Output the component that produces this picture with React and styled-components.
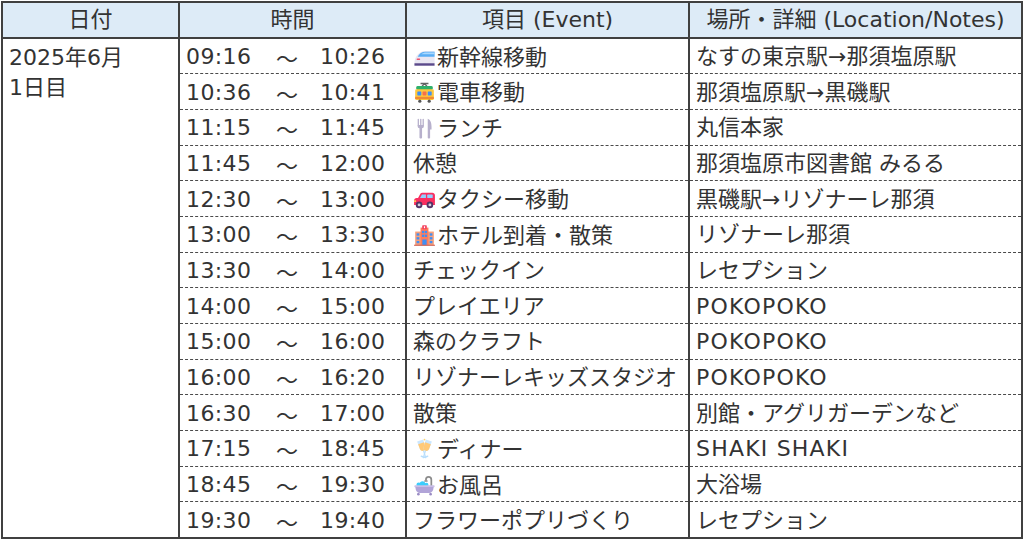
import React from 'react';
import styled, { createGlobalStyle } from 'styled-components';

const GlobalStyle = createGlobalStyle`
  html, body { margin: 0; padding: 0; background: #ffffff; }
  body {
    font-family: "DejaVu Sans", "Noto Sans CJK JP", sans-serif;
    color: #333333;
  }
`;

const Page = styled.div`
  padding: 1px 0 0 1px;
`;

const Table = styled.table`
  border-collapse: collapse;
  table-layout: fixed;
  width: 1020px;
  font-size: 22px;
`;

const HeadCell = styled.th`
  height: 34px;
  padding: 0;
  background: #ddebf7;
  border: 2px solid #404040;
  font-weight: normal;
  text-align: center;
  vertical-align: middle;
  line-height: 1;
  white-space: nowrap;
`;

const Row = styled.tr`
  height: 35.7px;
  &:last-child td {
    border-bottom: 2px solid #404040;
  }
`;

const Cell = styled.td`
  padding: 2px 0 0 ${(p) => p.$pad}px;
  border-left: 2px solid #404040;
  border-right: 2px solid #404040;
  border-bottom: 1px dashed #4a4a4a;
  vertical-align: middle;
  white-space: nowrap;
  line-height: 1;
`;

const DateCell = styled.td`
  padding: 4px 0 0 6px;
  border: 2px solid #404040;
  vertical-align: top;
  line-height: 30px;
`;

const TimeRange = styled.span`
  display: inline-grid;
  grid-template-columns: 68px 22px auto;
  column-gap: 22px;
  align-items: center;
  letter-spacing: 0.4px;
`;

const Tilde = styled.span`
  font-family: "Noto Sans CJK JP", sans-serif;
  letter-spacing: 0;
  text-align: center;
`;

const Latin = styled.span`
  letter-spacing: 1.2px;
`;

const Icon = styled.svg`
  width: 23px;
  height: 23px;
  vertical-align: -4px;
  margin-right: 1px;
`;

const Shinkansen = () => (
  <Icon viewBox="0 0 32 32">
    <path d="M2 24 C2 15 8.5 7 17 7 H30 V24 Z" fill="#e9e7f2" />
    <path d="M6.5 15 C8.5 10.5 12.5 8 17 8 H30 V15 Z" fill="#5aaef5" />
    <path d="M11.5 11.5 C13.5 9.6 15.8 9 18 9 H30 V11.5 Z" fill="#a9d8ff" />
    <rect x="5" y="17.5" width="5" height="2" rx="1" fill="#f0506e" />
    <rect x="2" y="24" width="28" height="3.4" fill="#5b4a8b" />
  </Icon>
);

const Tram = () => (
  <Icon viewBox="0 0 32 32">
    <path d="M10.5 3.5 H21.5 M16 3.5 L12.5 7.5 M16 3.5 L19.5 7.5" stroke="#636363" strokeWidth="1.8" fill="none" />
    <rect x="4.5" y="7" width="23" height="5.5" rx="2" fill="#2fb06b" />
    <rect x="3" y="11.5" width="26" height="15" rx="2" fill="#ffc83d" />
    <rect x="6" y="14.5" width="5.5" height="5.5" rx="0.8" fill="#3f8ff5" />
    <rect x="13.25" y="14.5" width="5.5" height="5.5" rx="0.8" fill="#f7704b" />
    <rect x="20.5" y="14.5" width="5.5" height="5.5" rx="0.8" fill="#3f8ff5" />
    <rect x="3" y="22" width="26" height="3.2" fill="#f08a35" />
    <circle cx="9.5" cy="28" r="2.2" fill="#555" />
    <circle cx="22.5" cy="28" r="2.2" fill="#555" />
  </Icon>
);

const ForkKnife = () => (
  <Icon viewBox="0 0 32 32">
    <rect x="6.5" y="2.5" width="1.8" height="10" rx="0.9" fill="#b7b0cc" />
    <rect x="9.9" y="2.5" width="1.8" height="10" rx="0.9" fill="#b7b0cc" />
    <rect x="13.3" y="2.5" width="1.8" height="10" rx="0.9" fill="#b7b0cc" />
    <path d="M6.5 11 H15.1 V13 C15.1 14.6 14 15.6 12.6 15.8 V28.8 C12.6 29.5 11.9 30 10.8 30 C9.8 30 9 29.5 9 28.8 V15.8 C7.6 15.6 6.5 14.6 6.5 13 Z" fill="#b7b0cc" />
    <path d="M20.5 2.5 C24 3.5 25.8 8 25.8 13.5 V17.5 H23.8 V28.8 C23.8 29.5 23.1 30 22.2 30 C21.2 30 20.5 29.5 20.5 28.8 Z" fill="#b7b0cc" />
  </Icon>
);

const Car = () => (
  <Icon viewBox="0 0 32 32">
    <path d="M1.5 23.5 V17.5 C1.5 15.5 3 14 5 14 H7 L10.2 8 C10.8 7 11.8 6.5 13 6.5 H27 C28.8 6.5 30.5 7.9 30.5 9.8 V23.5 Z" fill="#f92f60" />
    <path d="M9.8 14 L12.4 9.2 H18 V14 Z" fill="#8fd0ff" />
    <rect x="19.8" y="9.2" width="7.6" height="4.8" rx="0.8" fill="#8fd0ff" />
    <rect x="1.5" y="17" width="2.8" height="2.4" rx="0.8" fill="#ffd34f" />
    <circle cx="8.5" cy="23.5" r="4.6" fill="#533566" />
    <circle cx="8.5" cy="23.5" r="2" fill="#d3cfe0" />
    <circle cx="23.5" cy="23.5" r="4.6" fill="#533566" />
    <circle cx="23.5" cy="23.5" r="2" fill="#d3cfe0" />
  </Icon>
);

const Hotel = () => (
  <Icon viewBox="0 0 32 32">
    <rect x="3" y="10.5" width="26" height="19" fill="#f8a07a" />
    <rect x="10.5" y="5" width="11" height="24.5" fill="#ff7d5c" />
    <rect x="12.8" y="1.8" width="6.4" height="5.4" rx="1" fill="#f4425f" />
    <rect x="15.2" y="3.2" width="1.6" height="2.6" fill="#ffffff" />
    <rect x="5" y="13" width="3.8" height="3.2" fill="#3f8ff5" />
    <rect x="5" y="18.3" width="3.8" height="3.2" fill="#3f8ff5" />
    <rect x="5" y="23.6" width="3.8" height="3.2" fill="#3f8ff5" />
    <rect x="23.2" y="13" width="3.8" height="3.2" fill="#3f8ff5" />
    <rect x="23.2" y="18.3" width="3.8" height="3.2" fill="#3f8ff5" />
    <rect x="23.2" y="23.6" width="3.8" height="3.2" fill="#3f8ff5" />
    <rect x="12.4" y="9.5" width="3.2" height="3.2" fill="#3f8ff5" />
    <rect x="16.4" y="9.5" width="3.2" height="3.2" fill="#3f8ff5" />
    <rect x="12.4" y="14.8" width="3.2" height="3.2" fill="#3f8ff5" />
    <rect x="16.4" y="14.8" width="3.2" height="3.2" fill="#3f8ff5" />
    <rect x="13" y="21.5" width="6" height="8" fill="#3f8ff5" />
    <rect x="1.5" y="28.8" width="29" height="1.6" fill="#d0665a" />
  </Icon>
);

const Glass = ({ t }) => (
  <g transform={t}>
    <path d="M-4.5 0 H4.5 L4 11 C3.8 13.5 2.2 15 0 15 C-2.2 15 -3.8 13.5 -4 11 Z" fill="#cbe7ff" />
    <path d="M-4.3 4 H4.3 L4 11 C3.8 13.5 2.2 15 0 15 C-2.2 15 -3.8 13.5 -4 11 Z" fill="#ffc978" />
    <rect x="-0.8" y="15" width="1.6" height="8.5" fill="#b8defc" />
    <rect x="-4.2" y="23" width="8.4" height="2" rx="1" fill="#b8defc" />
  </g>
);

const Cheers = () => (
  <Icon viewBox="0 0 32 32">
    <Glass t="translate(10 3.5) rotate(-18)" />
    <Glass t="translate(22 3.5) rotate(18)" />
    <circle cx="16" cy="2.2" r="1.2" fill="#ffd36e" />
  </Icon>
);

const Bath = () => (
  <Icon viewBox="0 0 32 32">
    <path d="M25.5 17 V8 C25.5 5.6 23.8 4 21.7 4 C19.6 4 18 5.6 18 8 V9" stroke="#8c8c8c" strokeWidth="2.4" fill="none" />
    <rect x="15.6" y="8.6" width="4.8" height="2.2" rx="0.8" fill="#8c8c8c" />
    <circle cx="8" cy="15" r="3.2" fill="#3bcdfc" />
    <circle cx="13.2" cy="14" r="3.8" fill="#3bcdfc" />
    <circle cx="18.6" cy="15.2" r="3" fill="#3bcdfc" />
    <rect x="1.8" y="15.5" width="28.4" height="3.2" rx="1.5" fill="#c9bfe6" />
    <path d="M3.5 18 H28.5 V19 C28.5 23.8 25.3 26.5 21 26.5 H11 C6.7 26.5 3.5 23.8 3.5 19 Z" fill="#b1a4d8" />
    <circle cx="7.5" cy="28" r="1.8" fill="#9a8cc4" />
    <circle cx="24.5" cy="28" r="1.8" fill="#9a8cc4" />
  </Icon>
);

const rows = [
  ['09:16', '10:26', Shinkansen, '新幹線移動', 'なすの東京駅→那須塩原駅'],
  ['10:36', '10:41', Tram, '電車移動', '那須塩原駅→黒磯駅'],
  ['11:15', '11:45', ForkKnife, 'ランチ', '丸信本家'],
  ['11:45', '12:00', null, '休憩', '那須塩原市図書館 みるる'],
  ['12:30', '13:00', Car, 'タクシー移動', '黒磯駅→リゾナーレ那須'],
  ['13:00', '13:30', Hotel, 'ホテル到着・散策', 'リゾナーレ那須'],
  ['13:30', '14:00', null, 'チェックイン', 'レセプション'],
  ['14:00', '15:00', null, 'プレイエリア', 'POKOPOKO'],
  ['15:00', '16:00', null, '森のクラフト', 'POKOPOKO'],
  ['16:00', '16:20', null, 'リゾナーレキッズスタジオ', 'POKOPOKO'],
  ['16:30', '17:00', null, '散策', '別館・アグリガーデンなど'],
  ['17:15', '18:45', Cheers, 'ディナー', 'SHAKI SHAKI'],
  ['18:45', '19:30', Bath, 'お風呂', '大浴場'],
  ['19:30', '19:40', null, 'フラワーポプリづくり', 'レセプション'],
];

const isLatin = (s) => /^[A-Za-z ]+$/.test(s);

export default function App() {
  return (
    <>
      <GlobalStyle />
      <Page>
        <Table>
          <colgroup>
            <col style={{ width: 177 }} />
            <col style={{ width: 227 }} />
            <col style={{ width: 283 }} />
            <col style={{ width: 333 }} />
          </colgroup>
          <thead>
            <tr>
              <HeadCell>日付</HeadCell>
              <HeadCell>時間</HeadCell>
              <HeadCell>項目 (Event)</HeadCell>
              <HeadCell>場所・詳細 (Location/Notes)</HeadCell>
            </tr>
          </thead>
          <tbody>
            {rows.map(([start, end, Emoji, event, place], i) => (
              <Row key={i}>
                {i === 0 && (
                  <DateCell rowSpan={rows.length}>
                    2025年6月
                    <br />
                    1日目
                  </DateCell>
                )}
                <Cell $pad={6}>
                  <TimeRange>
                    <span>{start}</span>
                    <Tilde>～</Tilde>
                    <span>{end}</span>
                  </TimeRange>
                </Cell>
                <Cell $pad={6}>
                  {Emoji && <Emoji />}
                  {event}
                </Cell>
                <Cell $pad={6}>{isLatin(place) ? <Latin>{place}</Latin> : place}</Cell>
              </Row>
            ))}
          </tbody>
        </Table>
      </Page>
    </>
  );
}
